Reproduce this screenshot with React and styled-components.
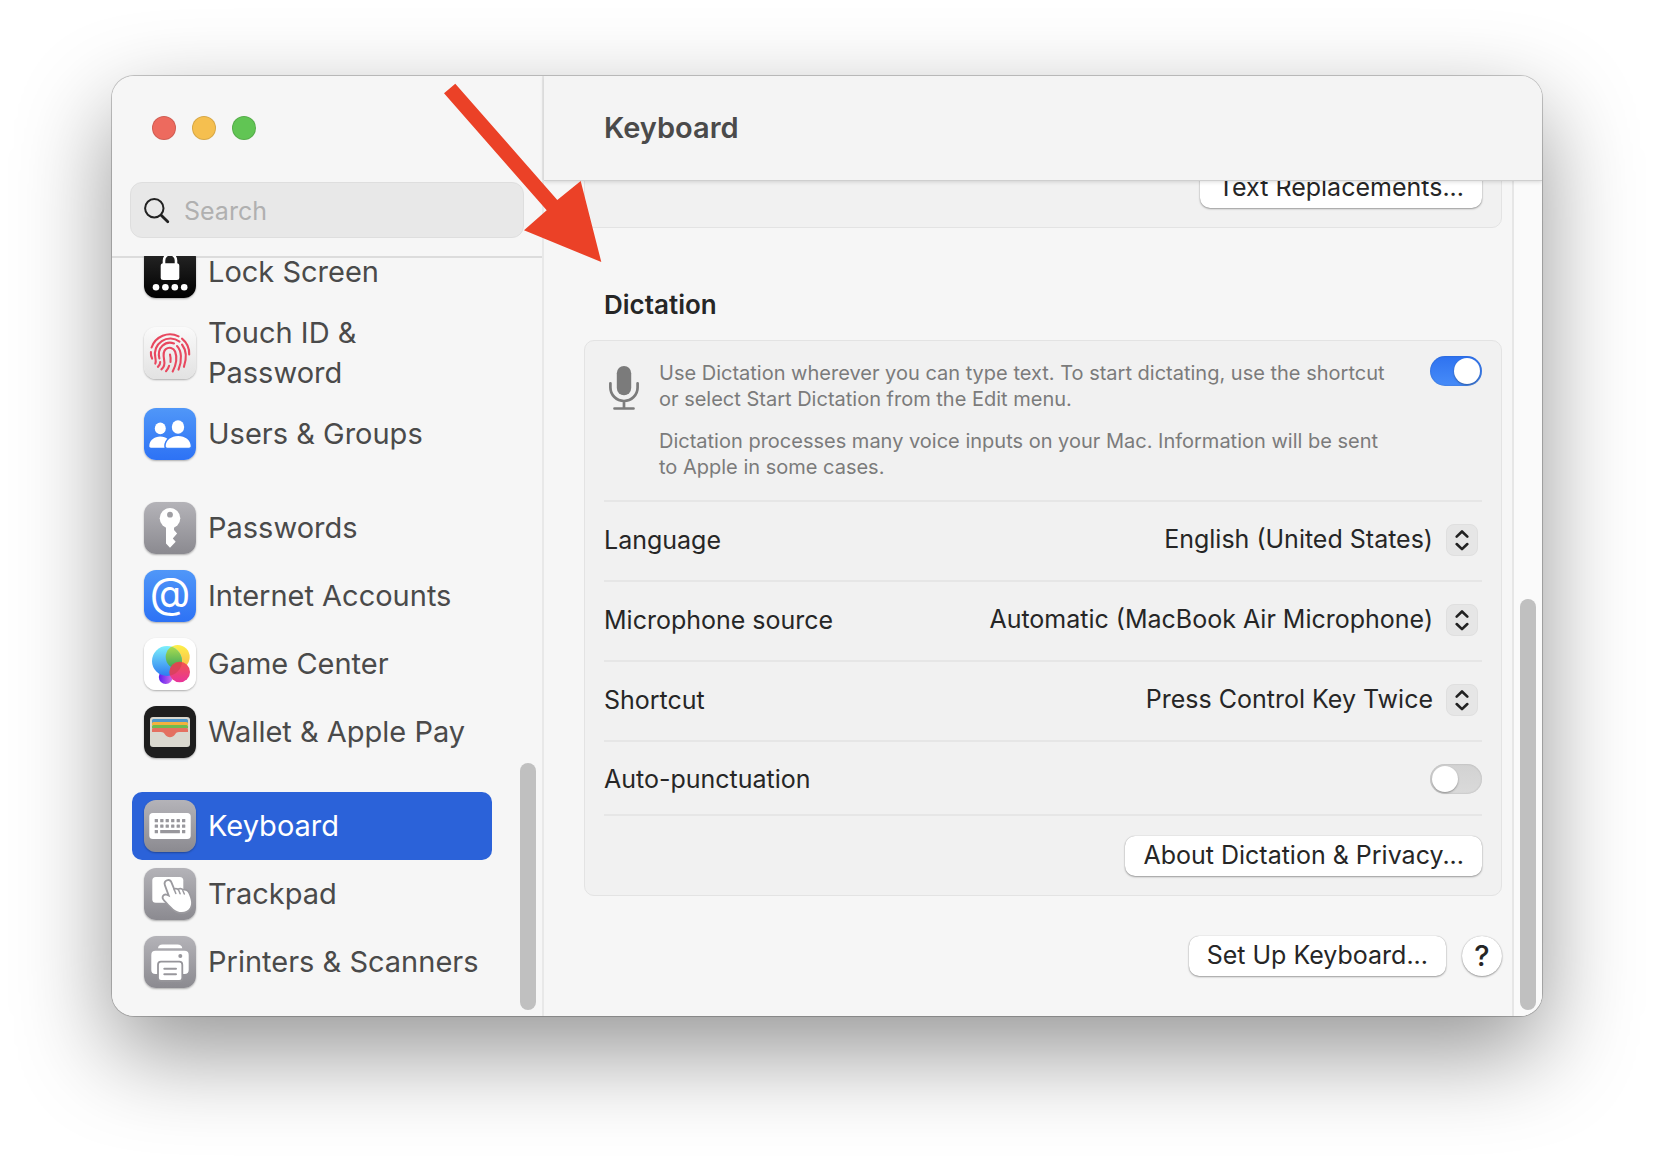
import React, { useState } from "react";
import styled, { createGlobalStyle } from "styled-components";

const GlobalStyle = createGlobalStyle`
  * {
    box-sizing: border-box;
  }
  body {
    margin: 0;
    background: #fff;
    font-family: Inter, "Liberation Sans", sans-serif;
  }
  button, input, select {
    font-family: inherit;
  }
`;

const Desktop = styled.div`
  display: flex;
  height: 100vh;
  padding: 76px 112px 148px;
`;

const WindowShadow = styled.div`
  display: flex;
  flex: 1;
  min-width: 0;
  border-radius: 22px;
  box-shadow: 0 0 0 1px rgba(0, 0, 0, 0.18), 0 0 2px rgba(0, 0, 0, 0.12),
    0 36px 94px rgba(0, 0, 0, 0.42);
`;

const Window = styled.div`
  position: relative;
  display: flex;
  flex: 1;
  min-width: 0;
  overflow: hidden;
  border-radius: 22px;
  background: #f6f6f6;
`;

const Arrow = styled.svg`
  position: absolute;
  top: 7px;
  left: 332px;
  width: 158px;
  height: 180px;
  pointer-events: none;
`;

/* sidebar */

const Sidebar = styled.aside`
  display: flex;
  flex-direction: column;
  flex: none;
  width: 432px;
  border-right: 2px solid #e8e8e8;
`;

const SidebarTop = styled.div`
  display: flex;
  flex-direction: column;
  gap: 42px;
  padding: 40px 18px 18px;
`;

const Lights = styled.div`
  display: flex;
  gap: 16px;
  padding-left: 22px;
`;

const Light = styled.button`
  width: 24px;
  height: 24px;
  padding: 0;
  border: 1px solid rgba(0, 0, 0, 0.12);
  border-radius: 50%;
  background: ${(props) => props.$color};
`;

const SearchBox = styled.label`
  display: flex;
  align-items: center;
  gap: 14px;
  height: 56px;
  padding: 2px 13px 0;
  border: 1px solid #dedede;
  border-radius: 12px;
  background: #e8e8e8;
`;

const SearchInput = styled.input`
  flex: 1;
  min-width: 0;
  padding: 0;
  border: 0;
  outline: 0;
  background: none;
  font-size: 25px;
  color: #262626;
  &::placeholder {
    color: #b0b0b0;
  }
`;

const SidebarBody = styled.div`
  display: flex;
  flex: 1;
  min-height: 0;
  background: linear-gradient(#dcdcdc, #dcdcdc) top / 100% 2px no-repeat;
`;

const Nav = styled.nav`
  display: flex;
  flex-direction: column;
  justify-content: flex-end;
  flex: 1;
  gap: 26px;
  overflow: hidden;
  padding: 0 28px 20px 20px;
`;

const NavGroup = styled.ul`
  flex: none;
  margin: 0;
  padding: 0;
  list-style: none;
`;

const NavLink = styled.a`
  display: flex;
  align-items: center;
  gap: 12px;
  min-height: 68px;
  padding: 7px 12px;
  border-radius: 10px;
  background: ${(props) => (props.$active ? "#2b62d9" : "transparent")};
  color: ${(props) => (props.$active ? "#fff" : "#4a4a4a")};
  font-size: 29px;
  line-height: 40px;
  text-decoration: none;
`;

const Tile = styled.svg`
  flex: none;
  width: 52px;
  height: 52px;
  border-radius: 12px;
  box-shadow: 0 1px 2px rgba(0, 0, 0, 0.3);
`;

const Track = styled.div`
  display: flex;
  flex-direction: column;
  justify-content: flex-end;
  flex: none;
  padding: 6px 6px 6px 0;
`;

const PaneTrack = styled(Track)`
  padding-left: 6px;
  border-left: 2px solid #e6e6e6;
  background: #fafafa;
`;

const Thumb = styled.div`
  width: 16px;
  height: ${(props) => props.$size};
  border-radius: 8px;
  background: #c0c0c0;
`;

/* main pane */

const Main = styled.main`
  display: flex;
  flex-direction: column;
  flex: 1;
  min-width: 0;
`;

const Header = styled.header`
  position: relative;
  display: flex;
  align-items: center;
  flex: none;
  height: 105px;
  padding: 0 60px 2px;
  border-bottom: 1px solid #cfcfcf;
  background: #f4f4f4;
  box-shadow: 0 1px 4px rgba(0, 0, 0, 0.14);
`;

const Title = styled.h1`
  margin: 0;
  font-size: 29px;
  font-weight: 600;
  color: #4a4a4a;
`;

const Pane = styled.div`
  display: flex;
  flex: 1;
  min-height: 0;
`;

const Content = styled.div`
  display: flex;
  flex-direction: column;
  justify-content: flex-end;
  flex: 1;
  min-width: 0;
  overflow: hidden;
  padding: 0 10px 40px 40px;
`;

const Card = styled.section`
  flex: none;
  padding: 0 19px;
  border: 1px solid #e3e3e3;
  border-radius: 10px;
  background: #f1f1f1;
`;

const SectionTitle = styled.h2`
  flex: none;
  margin: 0;
  padding: 61px 20px 19px;
  font-size: 26px;
  font-weight: 600;
  line-height: 32px;
  color: #262626;
`;

const Row = styled.div`
  display: flex;
  align-items: center;
  justify-content: space-between;
  height: ${(props) => (props.$short ? "74px" : "80px")};
  padding: ${(props) => (props.$short ? "2px 0 0" : "0 0 2px")};
  border-bottom: 2px solid #e6e6e6;
  font-size: 25px;
  color: #262626;
`;

const InfoRow = styled.div`
  display: flex;
  align-items: flex-start;
  padding: 15px 0 20px;
  border-bottom: 2px solid #e6e6e6;
`;

const MicIcon = styled.svg`
  flex: none;
  width: 30px;
  height: 44px;
  margin: 10px 20px 0 5px;
`;

const InfoText = styled.div`
  display: flex;
  flex-direction: column;
  flex: 1;
  gap: 16px;
  padding: 4px 32px 0 0;
  font-size: 20px;
  line-height: 26px;
  color: #7b7b7b;
  p {
    margin: 0;
  }
`;

const Switch = styled.input`
  appearance: none;
  flex: none;
  width: 52px;
  height: 30px;
  margin: 0;
  padding: 2px;
  border-radius: 15px;
  background: linear-gradient(#d2d2d2, #dadada);
  box-shadow: inset 0 0 2px rgba(0, 0, 0, 0.2);
  &::before {
    content: "";
    display: block;
    width: 26px;
    height: 26px;
    border-radius: 50%;
    background: #fff;
    box-shadow: 0 1px 2px rgba(0, 0, 0, 0.35);
  }
  &:checked {
    background: linear-gradient(#2e72f0, #478cf8);
  }
  &:checked::before {
    margin-left: 22px;
  }
`;

const SelectWrap = styled.div`
  display: grid;
  align-items: center;
  > * {
    grid-area: 1 / 1;
  }
`;

const Select = styled.select`
  appearance: none;
  field-sizing: content;
  padding: 0 49px 2px 0;
  border: 0;
  background: none;
  font-size: 25px;
  line-height: 32px;
  color: #262626;
  text-align: right;
`;

const Stepper = styled.svg`
  justify-self: end;
  width: 32px;
  height: 32px;
  margin-right: 4px;
  border: 1px solid #dfdfdf;
  border-radius: 8px;
  background: #e6e6e6;
  pointer-events: none;
`;

const ButtonRow = styled.div`
  display: flex;
  justify-content: flex-end;
  padding: 20px 0 19px;
`;

const Footer = styled.div`
  display: flex;
  justify-content: flex-end;
  flex: none;
  gap: 16px;
  padding-top: 40px;
`;

const PushButton = styled.button`
  height: 40px;
  padding: 0 18px 2px;
  border: 0;
  border-radius: 10px;
  background: #fff;
  box-shadow: 0 0 1px rgba(0, 0, 0, 0.3), 0 1px 2px rgba(0, 0, 0, 0.35);
  font-size: 25px;
  line-height: 32px;
  color: #262626;
  white-space: nowrap;
`;

const HelpButton = styled(PushButton)`
  width: 40px;
  padding: 0;
  border-radius: 50%;
  font-size: 29px;
  font-weight: 500;
`;

/* icons */

const Gradient = ({ id, from, to }) => (
  <linearGradient id={id} x1="0" y1="0" x2="0" y2="1">
    <stop offset="0" stopColor={from} />
    <stop offset="1" stopColor={to} />
  </linearGradient>
);

const AppIcon = ({ name, from, to, children }) => (
  <Tile viewBox="0 0 52 52" aria-hidden="true">
    <defs>
      <Gradient id={`${name}-bg`} from={from} to={to} />
    </defs>
    <rect width="52" height="52" fill={`url(#${name}-bg)`} />
    {children}
  </Tile>
);

const LockIcon = () => (
  <AppIcon name="lock" from="#2a2a2a" to="#000">
    <rect x="16.7" y="17.3" width="18.6" height="16.7" rx="2.5" fill="#fff" />
    <path d="M20 19v-4.5a6 6.3 0 0 1 12 0V19" fill="none" stroke="#fff" strokeWidth="2.6" />
    {[12, 21.4, 30.8, 40.2].map((x) => (
      <circle key={x} cx={x} cy="41.3" r="3.3" fill="#fff" />
    ))}
  </AppIcon>
);

const TouchIcon = () => (
  <AppIcon name="touch" from="#fafafa" to="#e2e2e2">
    <g fill="none" stroke="#e8485f" strokeWidth="2.1" strokeLinecap="round">
      <path d="M7.6 20.5A19.4 19.4 0 0 1 34.6 9.4" />
      <path d="M38 11.6A19.4 19.4 0 0 1 45.2 27.5" />
      <path d="M6.9 25c-.2 2.6.2 4.8 1.2 6.6" />
      <path d="M11.3 36.6c1-1.8.4-3.8 0-6.1A15.4 15.4 0 0 1 35.5 14.6" />
      <path d="M38 17.5c4.4 5.8 4.6 14.5 1.9 22.3" />
      <path d="M13.9 39.9c1.8-1.6 2.4-3 2.3-4.9" />
      <path d="M15.4 31.4c-1.3-5.2-.2-9.5 3-12.6a11.2 11.2 0 0 1 11.6-2.3" />
      <path d="M33 19c4.6 4.6 5.3 14.4 1.500 23.600" />
      <path d="M17.400 42.400c3.200-2.600 3.500-5.800 2.700-9.700-.9-4.700-.9-8.600 1.700-10.600 3.200-2.500 7.700-1.400 9.300 2.400 2.300 6 .9 13.600-2.400 20" />
      <path d="M22 44.200c1.700-1.800 2.700-3.600 3.100-5.400" />
      <path d="M26 27.600c.6 2.300.8 4.800.5 7.400" />
    </g>
  </AppIcon>
);

const UsersIcon = () => (
  <AppIcon name="users" from="#5097f8" to="#2d72f5">
    <g fill="#fff">
      <ellipse cx="16.3" cy="20.4" rx="5.5" ry="5.9" />
      <path d="M5.3 38c0-5.5 5-9.4 11-9.4S27 32.5 27 38c0 1-.6 1.7-1.7 1.7H6.9c-1 0-1.6-.7-1.6-1.7z" />
      <path
        d="M21.7 38c0-5.8 5.6-10 12.5-10s12.5 4.2 12.5 10c0 1-.7 1.7-1.7 1.7H23.3c-1 0-1.6-.7-1.6-1.7z"
        stroke="#3a80f7"
        strokeWidth="3"
        paintOrder="stroke"
      />
      <ellipse cx="34" cy="19" rx="6.2" ry="6.7" />
    </g>
  </AppIcon>
);

const KeyIcon = () => (
  <AppIcon name="key" from="#b4b3b8" to="#8b8a90">
    <circle cx="26" cy="16.3" r="10.3" fill="#fff" />
    <path d="M22 24v17.5l4 4.3 5.7-6-2.9-3.3 4.3-5-3.1-3.5v-4z" fill="#fff" />
    <circle cx="26" cy="12.7" r="2.9" fill="#9f9ea3" />
  </AppIcon>
);

const InternetIcon = () => (
  <AppIcon name="internet" from="#5097f8" to="#2d72f5">
    <text x="26" y="38" textAnchor="middle" fontSize="42" fontWeight="400" fill="#fff">
      @
    </text>
  </AppIcon>
);

const GameIcon = () => (
  <AppIcon name="game" from="#fff" to="#fff">
    <defs>
      <Gradient id="game-blue" from="#7df0fb" to="#2d7bf0" />
      <Gradient id="game-yellow" from="#fdf04a" to="#f8b84a" />
      <Gradient id="game-green" from="#b5e04e" to="#35a45c" />
      <Gradient id="game-red" from="#f2554d" to="#e9339a" />
      <linearGradient id="game-purple">
        <stop offset="0" stopColor="#5a1ef0" />
        <stop offset="1" stopColor="#d06bea" />
      </linearGradient>
      <clipPath id="game-clip">
        <circle cx="23" cy="23" r="15" />
      </clipPath>
    </defs>
    <circle cx="21.7" cy="39" r="6.9" fill="url(#game-purple)" />
    <circle cx="33.7" cy="18.9" r="12" fill="url(#game-yellow)" />
    <circle cx="23" cy="23" r="15" fill="url(#game-blue)" />
    <circle cx="33.7" cy="18.9" r="12" fill="url(#game-green)" clipPath="url(#game-clip)" />
    <circle cx="35.7" cy="34" r="10.3" fill="url(#game-red)" />
    <circle cx="35.7" cy="34" r="10.3" fill="#c8404a" opacity="0.5" clipPath="url(#game-clip)" />
  </AppIcon>
);

const WalletIcon = () => (
  <AppIcon name="wallet" from="#1e1e1e" to="#1e1e1e">
    <rect x="6" y="11" width="40" height="30" rx="3" fill="#dad8cf" />
    <path d="M8 17v-2.500q0-1.500 1.500-1.500h33q1.500 0 1.500 1.500V17z" fill="#4f97c9" />
    <path d="M8 19.500v-2q0-1.500 1.500-1.500h33q1.500 0 1.500 1.500v2z" fill="#f2b13e" />
    <path d="M8 22.500v-2q0-1.500 1.500-1.500h33q1.500 0 1.500 1.500v2z" fill="#6dbb50" />
    <path
      d="M8 26v-2.500Q8 22 9.500 22h33q1.500 0 1.500 1.500V26H35c-2 0-2.700.7-4 2.500-1.400 2-3 2.700-5 2.700s-3.600-.7-5-2.700c-1.300-1.800-2-2.500-4-2.500z"
      fill="#e47060"
    />
  </AppIcon>
);

const KeyboardIcon = () => (
  <AppIcon name="keyboard" from="#b4b3b8" to="#8b8a90">
    <rect x="5.3" y="13" width="41.4" height="26" rx="3.5" fill="#fff" />
    <g fill="#98979c">
      {[19, 24.5].map((y) =>
        [10.7, 16.2, 21.6, 27.1, 32.6, 38].map((x) => (
          <rect key={`${x}-${y}`} x={x} y={y} width="3.3" height="3.3" rx="0.5" />
        ))
      )}
      <rect x="10.7" y="30" width="3.3" height="3.3" rx="0.5" />
      <rect x="16.2" y="30" width="19.7" height="3.3" rx="0.5" />
      <rect x="38" y="30" width="3.3" height="3.3" rx="0.5" />
    </g>
  </AppIcon>
);

const TrackpadIcon = () => (
  <AppIcon name="trackpad" from="#b4b3b8" to="#8b8a90">
    <rect x="8.3" y="9" width="31" height="25.7" rx="3.5" fill="#fff" />
    <path
      d="M21.7 16.8c-1.2-3.8 3.600-5.400 5-1.900l3.100 7.500c1-1.300 3.200-1.300 4.200.1 1.200-1.400 3.700-1.200 4.500.5 2.300-1.200 5 .1 6 2.600 2.400 5.700 3.800 9.900 1.400 14.200-3.600 5.600-11.600 5.300-16.400 1.100-3.700-3.300-5.600-6-8.700-9-2.800-2.700-.5-5.400 2.200-4.100l3.300 1.500z"
      fill="#fff"
      stroke="#9b9a9f"
      strokeWidth="3.6"
      paintOrder="stroke"
      strokeLinejoin="round"
    />
    <path
      d="M30.2 21.5l1.600 4M34.600 22l1.500 3.700M39 23l1.300 3"
      fill="none"
      stroke="#9b9a9f"
      strokeWidth="1.500"
      strokeLinecap="round"
    />
  </AppIcon>
);

const PrinterIcon = () => (
  <AppIcon name="printer" from="#b4b3b8" to="#8b8a90">
    <path d="M14 12.2c.3-2.400 1.700-3.600 4.500-3.600h15c2.800 0 4.400 1.200 4.800 3.600z" fill="#fff" />
    <path
      d="M11.500 14.700h29q4.200 0 4.200 4.200v15q0 4.100-4.200 4.100h-29q-4.200 0-4.200-4.100v-15q0-4.200 4.200-4.200z"
      fill="#fff"
    />
    <circle cx="36.300" cy="20" r="2" fill="#98979c" />
    <rect x="14" y="25.700" width="24.300" height="19.300" rx="3" fill="#fff" stroke="#96959a" strokeWidth="1.800" />
    <path d="M20.300 32.700h11.700M20.300 38.300h11.700" stroke="#98979c" strokeWidth="2" strokeLinecap="round" />
  </AppIcon>
);

const GROUPS = [
  [
    { label: "Lock Screen", Icon: LockIcon },
    { label: "Touch ID & Password", Icon: TouchIcon },
    { label: "Users & Groups", Icon: UsersIcon },
  ],
  [
    { label: "Passwords", Icon: KeyIcon },
    { label: "Internet Accounts", Icon: InternetIcon },
    { label: "Game Center", Icon: GameIcon },
    { label: "Wallet & Apple Pay", Icon: WalletIcon },
  ],
  [
    { label: "Keyboard", Icon: KeyboardIcon, active: true },
    { label: "Trackpad", Icon: TrackpadIcon },
    { label: "Printers & Scanners", Icon: PrinterIcon },
  ],
];

const OPTIONS = [
  { id: "language", label: "Language", value: "English (United States)" },
  { id: "source", label: "Microphone source", value: "Automatic (MacBook Air Microphone)" },
  { id: "shortcut", label: "Shortcut", value: "Press Control Key Twice" },
];

const OptionRow = ({ id, label, value }) => (
  <Row>
    <label htmlFor={id}>{label}</label>
    <SelectWrap>
      <Select id={id}>
        <option>{value}</option>
      </Select>
      <Stepper viewBox="0 0 32 32" aria-hidden="true">
        <path
          d="M10.3 12.4L16 6.9l5.700 5.500M10.3 20.3l5.700 5.400 5.700-5.400"
          fill="none"
          stroke="#222"
          strokeWidth="2.8"
          strokeLinecap="round"
          strokeLinejoin="round"
        />
      </Stepper>
    </SelectWrap>
  </Row>
);

export default () => {
  const [dictation, setDictation] = useState(true);
  const [punctuation, setPunctuation] = useState(false);
  return (
    <>
      <GlobalStyle />
      <Desktop>
        <WindowShadow>
          <Window>
            <Sidebar>
              <SidebarTop>
                <Lights>
                  <Light $color="#ed6a5e" aria-label="Close" />
                  <Light $color="#f5bf4f" aria-label="Minimize" />
                  <Light $color="#61c554" aria-label="Zoom" />
                </Lights>
                <SearchBox>
                  <svg width="26" height="26" viewBox="0 0 26 26" fill="none" stroke="#222" strokeLinecap="round" aria-hidden="true">
                    <circle cx="10.3" cy="10.3" r="9.2" strokeWidth="2" />
                    <path d="M17.2 17.2l6.600 6.600" strokeWidth="2.8" />
                  </svg>
                  <SearchInput type="text" placeholder="Search" aria-label="Search" />
                </SearchBox>
              </SidebarTop>
              <SidebarBody>
                <Nav>
                  {GROUPS.map((items, i) => (
                    <NavGroup key={i}>
                      {items.map(({ label, Icon, active }) => (
                        <li key={label}>
                          <NavLink href="#" $active={active}>
                            <Icon />
                            <span>{label}</span>
                          </NavLink>
                        </li>
                      ))}
                    </NavGroup>
                  ))}
                </Nav>
                <Track>
                  <Thumb $size="33%" />
                </Track>
              </SidebarBody>
            </Sidebar>
            <Main>
              <Header>
                <Title>Keyboard</Title>
              </Header>
              <Pane>
                <Content>
                  <Card>
                    <ButtonRow>
                      <PushButton>Text Replacements...</PushButton>
                    </ButtonRow>
                  </Card>
                  <SectionTitle>Dictation</SectionTitle>
                  <Card>
                    <InfoRow>
                      <MicIcon viewBox="0 0 30 44" aria-hidden="true">
                        <rect x="7.8" width="14.4" height="29.3" rx="7.2" fill="#7b7b7b" />
                        <path
                          d="M1.4 17.3V21.500a13.600 13.500 0 0 0 27.200 0V17.300M15 35v7M5.500 42.500h19"
                          fill="none"
                          stroke="#7b7b7b"
                          strokeWidth="2.7"
                          strokeLinecap="round"
                        />
                      </MicIcon>
                      <InfoText>
                        <p>
                          Use Dictation wherever you can type text. To start dictating, use the
                          shortcut or select Start Dictation from the Edit menu.
                        </p>
                        <p>
                          Dictation processes many voice inputs on your Mac. Information will be
                          sent to Apple in some cases.
                        </p>
                      </InfoText>
                      <Switch
                        type="checkbox"
                        role="switch"
                        aria-label="Dictation"
                        checked={dictation}
                        onChange={() => setDictation(!dictation)}
                      />
                    </InfoRow>
                    {OPTIONS.map((option) => (
                      <OptionRow key={option.id} {...option} />
                    ))}
                    <Row $short>
                      <label htmlFor="punctuation">Auto-punctuation</label>
                      <Switch
                        type="checkbox"
                        role="switch"
                        id="punctuation"
                        checked={punctuation}
                        onChange={() => setPunctuation(!punctuation)}
                      />
                    </Row>
                    <ButtonRow>
                      <PushButton>About Dictation & Privacy...</PushButton>
                    </ButtonRow>
                  </Card>
                  <Footer>
                    <PushButton>Set Up Keyboard...</PushButton>
                    <HelpButton aria-label="Help">?</HelpButton>
                  </Footer>
                </Content>
                <PaneTrack>
                  <Thumb $size="50%" />
                </PaneTrack>
              </Pane>
            </Main>
            <Arrow viewBox="0 0 158 180" aria-hidden="true">
              <path d="M0 10.300L11.300.700l102 116.300 23.400-19L157.300 179 80 147.300l22.700-20z" fill="#eb4127" />
            </Arrow>
          </Window>
        </WindowShadow>
      </Desktop>
    </>
  );
};
